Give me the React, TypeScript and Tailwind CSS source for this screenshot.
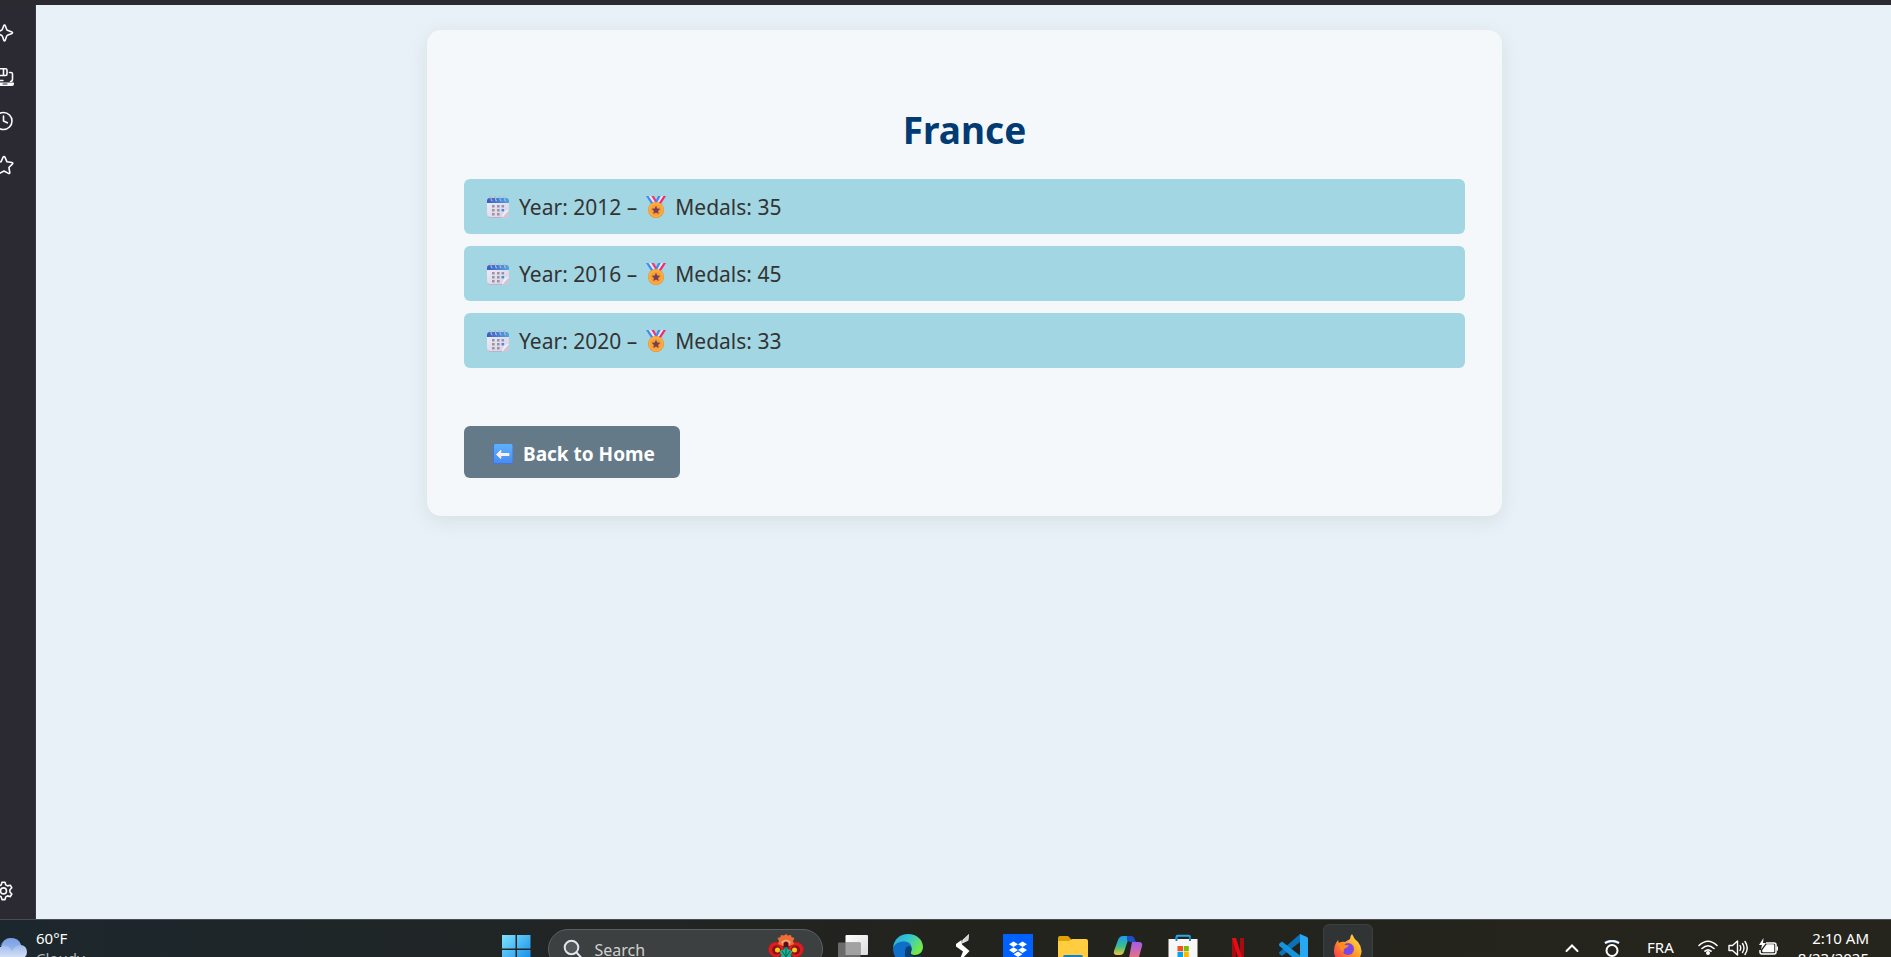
import type { ReactNode } from "react";

type Result = { year: number; medals: number };

const results: Result[] = [
  { year: 2012, medals: 35 },
  { year: 2016, medals: 45 },
  { year: 2020, medals: 33 },
];

function CalendarIcon() {
  return (
    <svg viewBox="0 0 22 22" className="size-[22px] shrink-0" aria-hidden="true">
      <defs>
        <linearGradient id="cal-top" x1="0" x2="1" y1="0" y2="0">
          <stop offset="0" stopColor="#3a5cc4" />
          <stop offset="1" stopColor="#4ba6e6" />
        </linearGradient>
        <linearGradient id="cal-body" x1="0" x2="1" y1="0" y2="1">
          <stop offset="0" stopColor="#eeeaf6" />
          <stop offset="1" stopColor="#d9cfe0" />
        </linearGradient>
      </defs>
      <path d="M0 6h22v9.500l-6 6H3.500a3.500 3.500 0 0 1-3.500-3.500z" fill="url(#cal-body)" />
      <path d="M0 7V5a3 3 0 0 1 3-3h16a3 3 0 0 1 3 3v2z" fill="url(#cal-top)" />
      <path d="M0 17.500a3.500 3.500 0 0 0 3.500 3.500H17l-1 1H4a4 4 0 0 1-4-4z" fill="#bdb0cc" />
      <path d="M22 15.500v3a3.500 3.500 0 0 1-3.500 3.500H15q2-1 2-3.500t2-3z" fill="#cfc5d8" />
      <path d="M22 14l-7 8q.5-4 2-6t5-2z" fill="#f1edf6" />
      <g fill="none" stroke="#b9b4cb" strokeWidth="1.200">
        <path d="M2.500 1q1.800-.8 1.600 1.500T5.500 5M7 1q1.800-.8 1.600 1.500T10 5M11.500 1q1.800-.8 1.600 1.500T14.500 5M16 1q1.800-.8 1.600 1.500T19 5" />
      </g>
      <g fill="#9695a6">
        <path d="M5 9h2.600v2.400H5zM10 9h2.600v2.400H10zM14.500 9h2.600v2.400h-2.600zM5 13h2.600v2.400H5zM10 13h2.600v2.400H10zM5 17h2.600v2.400H5zM10 17h2.600v2.400H10z" />
      </g>
      <path d="M14.500 13h2.600v2.400h-2.600z" fill="#3c8ee6" />
    </svg>
  );
}

function MedalIcon() {
  return (
    <svg viewBox="0 0 22 22" className="size-[22px] shrink-0" aria-hidden="true">
      <path d="M1 0h2.700l5 7.500-2.200 1z" fill="#3f8cf0" />
      <path d="M3.700 0h2.600l4 6-1.600 1.500z" fill="#ece6f5" />
      <path d="M6.300 0h2.700l3 5-1.500 2z" fill="#f23a78" />
      <path d="M21 0h-2.700l-5 7.500 2.200 1z" fill="#f8286c" />
      <path d="M18.300 0h-2.600l-4 6 1.600 1.500z" fill="#ece6f5" />
      <path d="M15.700 0H13l-3 6 2 1z" fill="#3f8cf0" />
      <circle cx="11" cy="14" r="8" fill="#f58a3c" />
      <circle cx="11" cy="13.800" r="7.400" fill="#fcae3a" />
      <circle cx="11" cy="14" r="5.600" fill="#f4a035" />
      <path d="M11 9.800l1.300 2.700 3 .3-2.200 2.100.6 3-2.700-1.500-2.700 1.500.6-3-2.200-2.100 3-.3z" fill="#7b3d55" />
    </svg>
  );
}

function BackArrowIcon() {
  return (
    <svg viewBox="0 0 20 20" className="size-5 shrink-0" aria-hidden="true">
      <defs>
        <linearGradient id="back-tile" x1="0" x2="0" y1="0" y2="1">
          <stop offset="0" stopColor="#5cb2ff" />
          <stop offset="1" stopColor="#4b8cf0" />
        </linearGradient>
      </defs>
      <rect width="20" height="20" rx="2" fill="#4374df" />
      <rect x="1" width="18.500" height="19" rx="1.500" fill="url(#back-tile)" />
      <path d="M3.500 10.500l4.300-4.300V9.500H16v2H7.800v3z" fill="#fbeefb" stroke="#fbeefb" strokeWidth="1" strokeLinejoin="round" />
    </svg>
  );
}

function RailButton({ label, children }: { label: string; children: ReactNode }) {
  return (
    <button type="button" aria-label={label} className="flex h-11 w-5 items-center justify-end overflow-hidden pr-1.5 text-[#fbfbfe]">
      <svg
        viewBox="0 0 20 20"
        className="size-5 shrink-0"
        fill="none"
        stroke="currentColor"
        strokeWidth="1.600"
        strokeLinejoin="round"
        strokeLinecap="round"
        aria-hidden="true"
      >
        {children}
      </svg>
    </button>
  );
}

function SideRail() {
  return (
    <aside className="flex w-9 shrink-0 flex-col justify-between border-r border-[#3a3943] bg-[#2b2a33] pt-1.5 pb-1.5">
      <div className="flex flex-col">
        <RailButton label="Assistant">
          <path d="M10.500 2q.6 0 .8.800l1.300 3.400q.4 1 1.400 1.400l4 1.500q1 .6 0 1.300l-4 1.500q-1 .4-1.400 1.400l-1.400 4q-.7 1.200-1.400 0l-1.400-4q-.4-1-1.400-1.400l-4-1.500q-1-.7 0-1.300l4-1.500q1-.4 1.400-1.400l1.300-3.400q.2-.8.800-.8z" />
        </RailButton>
        <RailButton label="Synced devices">
          <path d="M3 1.800h8.500a1.500 1.500 0 0 1 1.500 1.500V7a1.500 1.500 0 0 1-1.500 1.500H3zM9.500 2v6M15.500 5.500H17a1.500 1.500 0 0 1 1.500 1.500v5q0 2.500-2 2.500" />
          <path d="M2 15.500h17.500q.5 0 .5.500v1q0 2-2 2H2z" fill="currentColor" stroke="none" />
          <path d="M9 17h4" stroke="#2b2a33" strokeWidth="1.200" />
          <path d="M3 13.500h6" strokeWidth="1.500" />
        </RailButton>
        <RailButton label="History">
          <circle cx="9.500" cy="10" r="8.500" />
          <path d="M9.500 5v5l3.800 1.800" />
        </RailButton>
        <RailButton label="Bookmarks">
          <path d="M10 1.500q.6 0 .9.700l2.100 4.600 5 .7q1.300.4.500 1.400l-3.600 3.600.9 5q0 1.400-1.300.9L10 16l-4.500 2.400q-1.300.5-1.300-.9l.9-5-3.600-3.600q-.8-1 .5-1.400l5-.7 2.100-4.600q.3-.7.900-.7z" />
        </RailButton>
      </div>
      <RailButton label="Settings">
        <path d="M8 1.200h3l.8 2.700 1.700 1 2.800-.7 1.500 2.600-1.900 2v2.200l1.900 2-1.500 2.600-2.800-.7-1.700 1-.8 2.700H8l-.8-2.700-1.700-1-2.800.7-1.500-2.600 1.900-2V8.800l-1.900-2 1.500-2.600 2.800.7 1.700-1z" />
        <circle cx="9.500" cy="9.900" r="3" />
      </RailButton>
    </aside>
  );
}

function ResultsPage() {
  return (
    <main className="min-w-0 flex-1 overflow-hidden bg-[#e8f1f8] pt-[25px] pr-6 pl-[26px] font-['Noto_Sans','Open_Sans',sans-serif] text-[#333333]">
      <section className="mx-auto w-full max-w-[1075px] rounded-[14px] bg-[#f4f8fb] px-[37px] pt-[68px] pb-[38px] shadow-[0_5px_19px_rgba(155,170,145,0.22)]">
        <h1 className="mb-[18px] text-center text-[37px] leading-[63px] font-bold text-[#003b73]">France</h1>
        <ul className="flex flex-col gap-3">
          {results.map((r) => (
            <li key={r.year} className="flex h-[55px] items-center rounded-md bg-[#a2d6e2] px-[23px] text-[21px] leading-8">
              <CalendarIcon />
              <span className="ml-2.5">Year: {r.year} –</span>
              <span className="mx-2 flex">
                <MedalIcon />
              </span>
              <span>Medals: {r.medals}</span>
            </li>
          ))}
        </ul>
        <a href="#home" className="mt-[58px] inline-flex h-[52px] items-center gap-2.5 rounded-md bg-[#647a88] pt-1 pr-[25px] pl-[29px] text-[19px] font-bold text-white">
          <BackArrowIcon />
          Back to Home
        </a>
      </section>
    </main>
  );
}

function AppButton({ label, active, children }: { label: string; active?: boolean; children: ReactNode }) {
  return (
    <button
      type="button"
      aria-label={label}
      className={
        active
          ? "flex size-[50px] shrink-0 items-center justify-center rounded-md border border-[#3c4040] bg-[#303435]"
          : "flex size-[50px] shrink-0 items-center justify-center rounded-md"
      }
    >
      <svg viewBox="0 0 30 30" className="size-[30px]" aria-hidden="true">
        {children}
      </svg>
    </button>
  );
}

function FlowerArt() {
  return (
    <svg viewBox="0 0 36 36" className="size-9 shrink-0" aria-hidden="true">
      <path d="M18 16v20M18 30L8 22M18 30l10-8M18 26l-6-8M18 26l6-8" stroke="#14a58a" strokeWidth="3" fill="none" />
      <circle cx="8" cy="15.500" r="7.500" fill="#d8201f" strokeDasharray="2 1.500" stroke="#b5141a" />
      <circle cx="28" cy="15.500" r="7.500" fill="#d8201f" strokeDasharray="2 1.500" stroke="#b5141a" />
      <circle cx="8.500" cy="16" r="4.500" fill="#8f1016" />
      <circle cx="27.500" cy="16" r="4.500" fill="#8f1016" />
      <circle cx="9.500" cy="16" r="2.500" fill="#ffc61a" />
      <circle cx="26.500" cy="16" r="2.500" fill="#ffc61a" />
      <path d="M18 0l2 1.500L23 1l.5 2 3 1-1.500 3 1 3-3.500 1.500L18 13l-4.500-1.500L10 10l1-3-1.500-3 3-1L13 1l3 .5z" fill="#ee6c35" />
      <path d="M13 8q5-5 10 0l-2 4h-6z" fill="#f7a07a" />
      <path d="M15.500 9q2.500-3 5 0v4h-5z" fill="#5c0d12" />
      <path d="M11 17l4-1 3-3 3 3 4 1-3 4 2 3-2 4h-8l-2-4 2-3z" fill="#19b395" />
      <path d="M14 17l4 6 4-6M18 14v12" stroke="#0b5f57" strokeWidth="1" fill="none" />
      <path d="M1 27q6-4 9 3l-4 6zM35 27q-6-4-9 3l4 6z" fill="#d8201f" />
    </svg>
  );
}

function Taskbar() {
  return (
    <footer className="flex h-[38px] shrink-0 items-start overflow-hidden border-t border-[#4a4d4c] bg-linear-to-r from-[#1c272d] via-[#23231e] to-[#25251d] pr-[22px] font-['Noto_Sans','Open_Sans',sans-serif] text-[15px] leading-5 text-white">
      <div className="flex flex-1 basis-0 items-start pt-2">
        <svg viewBox="0 0 30 30" className="mt-1.5 mr-1.5 h-[30px] w-[30px] shrink-0" aria-hidden="true">
          <defs>
            <linearGradient id="cloud" x1="0" x2="0" y1="0" y2="1">
              <stop offset="0" stopColor="#7fa5e6" />
              <stop offset="1" stopColor="#dbe6f8" />
            </linearGradient>
          </defs>
          <path d="M-6 21a7 7 0 0 1 7-8q2-9 10-9 8 0 10 7 6 1 6 7t-7 7H0z" fill="url(#cloud)" />
          <path d="M0 12q8-2 12 5 3-6 9-6-2-7-10-7-8 0-11 8z" fill="#6c97df" opacity=".4" />
        </svg>
        <div className="flex flex-col">
          <span>60°F</span>
          <span className="text-[#b4b8ba]">Cloudy</span>
        </div>
      </div>

      <nav aria-label="Pinned apps" className="mr-1.5 flex items-start gap-[5px] pt-1">
        <AppButton label="Start">
          <defs>
            <linearGradient id="win" x1="0" x2="1" y1="0" y2="1">
              <stop offset="0" stopColor="#7fe3fd" />
              <stop offset="1" stopColor="#0a86e8" />
            </linearGradient>
          </defs>
          <path d="M1 1h13.500v13.500H1zM16 1h13.500v13.500H16zM1 16h13.500v13.500H1zM16 16h13.500v13.500H16z" fill="url(#win)" />
        </AppButton>
        <label className="mt-[5px] ml-0.5 flex h-10 w-[275px] items-center rounded-full border border-[#5c6060] bg-[#3d4040] pl-3.5">
          <svg viewBox="0 0 20 20" className="mr-3 size-5 shrink-0" fill="#55585a" stroke="#e2e4ea" strokeWidth="2" strokeLinecap="round" aria-hidden="true">
            <circle cx="8.500" cy="8.500" r="6.800" />
            <path d="M13.500 13.500L18 18.500" />
          </svg>
          <input type="search" aria-label="Search" placeholder="Search" className="min-w-0 flex-1 bg-transparent pt-0.5 text-base text-white outline-none placeholder:text-[#cfd1d1]" />
          <span className="mt-1.5 mr-[18px] flex">
            <FlowerArt />
          </span>
        </label>
        <AppButton label="Task view">
          <defs>
            <linearGradient id="tv" x1="0" x2="1" y1="0" y2="1">
              <stop offset="0" stopColor="#ffffff" />
              <stop offset="1" stopColor="#dcdcdc" />
            </linearGradient>
          </defs>
          <rect x="7.500" y="1" width="22.500" height="20" rx="1" fill="url(#tv)" />
          <rect x="0" y="8.500" width="22.500" height="20" rx="1" fill="#6b6b6b" />
          <path d="M7.500 8.500h15V21h-15z" fill="#a2a2a2" />
        </AppButton>
        <AppButton label="Edge">
          <defs>
            <linearGradient id="edge-a" x1="0" x2="1" y1="0" y2=".5">
              <stop offset="0" stopColor="#2aa7dc" />
              <stop offset=".5" stopColor="#33c6d2" />
              <stop offset="1" stopColor="#74e84a" />
            </linearGradient>
          </defs>
          <path d="M0 14C1 5 7 0 15 0c9 0 15 6 15 13 0 5-4 8-8 8-3 0-5-1-4-3 2-4-1-8-6-8-6 0-11 2-12 4z" fill="url(#edge-a)" />
          <path d="M0 14c2-5 7-7 12-6.500 5 .5 8 4.500 6 9-6-3-8 4-4 8s10 3 13 1C24 29 20 30 15 30 6 30 0 23 0 14z" fill="#0f6fc8" />
          <path d="M12 18c0-4 2-6 4-6 2 0 3 3 2 5-2 2-1 4 2 5 3 1 6 1 8-1-1 5-5 8-8 8-5-1-8-6-8-11z" fill="#0b3f7a" />
        </AppButton>
        <AppButton label="Notes">
          <path d="M21 0l-.8 6.500L14 9.500l.5-3.500z" fill="#ffffff" />
          <path d="M8 10l5.500-4 .5 4.500 7.500 6.500-7 7.500-2-1 2.500-6L8 12.500z" fill="#ffffff" />
          <path d="M21 0l-5 5.500-1 3.500 5.200-2.500z" fill="#d5d5d5" />
        </AppButton>
        <AppButton label="Dropbox">
          <path d="M0 0h30v30H0z" fill="#0061fe" />
          <path d="M10.500 7.500L15 10.300l-4.500 2.800L6 10.300zM19.500 7.500l4.500 2.800-4.500 2.800-4.500-2.800zM10.500 13.300l4.500 2.800-4.500 2.800L6 16.100zM19.500 13.300l4.500 2.800-4.500 2.800-4.500-2.800zM15 17.400l4.500 2.800L15 23l-4.500-2.800z" fill="#fff" />
        </AppButton>
        <AppButton label="File Explorer">
          <path d="M0 4q0-2 2-2h8l3 3v6H0z" fill="#dfa106" />
          <path d="M0 7h11l3-2h14q2 0 2 2v21H0z" fill="#ffcd3f" />
          <path d="M5 30v-7q0-2 2-2h16q2 0 2 2v7z" fill="#147fc6" />
        </AppButton>
        <AppButton label="Copilot">
          <defs>
            <linearGradient id="cp-a" x1="0" x2="0" y1="0" y2="1">
              <stop offset="0" stopColor="#1d9cf0" />
              <stop offset=".55" stopColor="#3abf8c" />
              <stop offset="1" stopColor="#f2c42c" />
            </linearGradient>
            <linearGradient id="cp-b" x1="0" x2="0" y1="0" y2="1">
              <stop offset="0" stopColor="#a35bee" />
              <stop offset="1" stopColor="#fb7b60" />
            </linearGradient>
          </defs>
          <path d="M5 6q1.500-4 5-4h9q-3 0-4 4l-4 12q-1 3-4 3H4q-4 0-3-4z" fill="url(#cp-a)" />
          <path d="M14 2h4q3 0 4 4l1 2h-4q-4 0-5-2z" fill="#1b4fc4" />
          <path d="M19 8h7q4 0 3 4l-3 11q-2 5-6 5h-8q3 0 4-4z" fill="url(#cp-b)" />
        </AppButton>
        <AppButton label="Microsoft Store">
          <path d="M8.500 7V3q0-1.200 1.200-1.200h11q1.200 0 1.200 1.200v4" fill="none" stroke="#27a9ea" strokeWidth="2" />
          <path d="M.5 5h29v22q0 3-3 3h-23q-3 0-3-3z" fill="#f7f7f7" />
          <path d="M7.500 3h2v4h-2zM21 3h2v4h-2z" fill="#1586c8" />
          <path d="M9.500 12H15v5.300H9.500z" fill="#f25022" />
          <path d="M15.800 12h5v5.300h-5z" fill="#7fba00" />
          <path d="M9.500 18H15v5.300H9.500z" fill="#00a4ef" />
          <path d="M15.800 18h5v5.300h-5z" fill="#ffb900" />
        </AppButton>
        <AppButton label="Netflix">
          <path d="M9 4h4v26H9zM17 4h4v26h-4z" fill="#a50c12" />
          <path d="M9 4h4l8 26h-4z" fill="#e60c16" />
        </AppButton>
        <AppButton label="Visual Studio Code">
          <path d="M22 0v8L4 22l-2.500-2q-1-1 0-2z" fill="#0b72b9" />
          <path d="M1.500 9.500L4 7.500l18 14V30L1.500 12q-1-1.300 0-2.500z" fill="#1593dc" />
          <path d="M22 0l7 3q1 .5 1 1.500v21q0 1-1 1.500l-7 3z" fill="#27a8f2" />
        </AppButton>
        <AppButton label="Firefox" active>
          <defs>
            <linearGradient id="fx" x1="1" x2="0" y1="0" y2="1">
              <stop offset="0" stopColor="#fff04a" />
              <stop offset=".45" stopColor="#ff9a26" />
              <stop offset="1" stopColor="#f5245c" />
            </linearGradient>
          </defs>
          <path d="M17 5q0-3 2-5 2 5 6 8 4 5 3.500 10C28 25 22 30 15 30S1 25 1 17c0-4 1-7 4-11l1 3q3-2 6-1z" fill="url(#fx)" />
          <circle cx="15" cy="15" r="6" fill="#7a45e6" />
          <path d="M4 10q4-3 7 0 2 2 5 1-1 3-4 3.500-2 1-1 4-4-2-4-5z" fill="#ff8a1f" />
        </AppButton>
      </nav>

      <div className="flex flex-1 basis-0 items-start justify-end pt-2">
        <button type="button" aria-label="Show hidden icons" className="mt-3 mr-6 flex">
          <svg viewBox="0 0 16 16" className="size-4" fill="none" stroke="#fff" strokeWidth="2" strokeLinecap="round" aria-hidden="true">
            <path d="M2.500 11L8 5.500l5.500 5.500" />
          </svg>
        </button>
        <button type="button" aria-label="Screen capture" className="mt-3 mr-[27px] flex">
          <svg viewBox="0 0 16 20" className="h-5 w-4" fill="none" stroke="#fff" aria-hidden="true">
            <path d="M1 3q7-4 14 0" strokeWidth="2.500" stroke="#a9c6f5" />
            <path d="M1 3q7-4 14 0" strokeWidth="1.500" />
            <circle cx="8" cy="10.500" r="5.500" strokeWidth="2" />
          </svg>
        </button>
        <span className="mt-2.5 mr-6 leading-[18px]">FRA</span>
        <svg viewBox="0 0 20 20" className="mt-2.5 mr-2.5 size-5" fill="none" stroke="#fff" strokeWidth="1.600" strokeLinecap="round" aria-hidden="true">
          <path d="M1 7.500q9-8.500 18 0M4 10.500q6-5.500 12 0M7 13.200q3-2.600 6 0" />
          <circle cx="10" cy="15" r="1.200" fill="#fff" />
        </svg>
        <svg viewBox="0 0 20 20" className="mt-2.5 size-5" fill="none" stroke="#fff" strokeWidth="1.400" strokeLinecap="round" strokeLinejoin="round" aria-hidden="true">
          <path d="M1 7.500h3.500L9.500 3v14l-5-4.500H1zM12 7.500q1.500 2.500 0 5M14.500 5.500q3 4.500 0 9M17 3.500q4.500 6.500 0 13" />
        </svg>
        <svg viewBox="0 0 20 20" className="mt-2.5 mr-5 ml-2.5 size-5" fill="none" stroke="#fff" strokeWidth="1.500" strokeLinejoin="round" aria-hidden="true">
          <path d="M8 5h8q2 0 2 2v7q0 2-2 2H4q-2 0-2-2v-2" />
          <path d="M5 13.500v-1l4-5.500h6.500v6.500z" fill="#fff" />
          <path d="M5.500 0L1 7h3l-1 4.500L8 5H5z" fill="#fff" stroke="none" />
          <path d="M19.500 8.500v4" strokeWidth="2" />
        </svg>
        <div className="flex flex-col items-end">
          <span>2:10 AM</span>
          <span>8/23/2025</span>
        </div>
      </div>
    </footer>
  );
}

export default function App() {
  return (
    <div className="flex h-screen flex-col overflow-hidden border-t-5 border-[#2b2a30] bg-[#e8f1f8]">
      <div className="flex min-h-0 flex-1">
        <SideRail />
        <ResultsPage />
      </div>
      <Taskbar />
    </div>
  );
}
